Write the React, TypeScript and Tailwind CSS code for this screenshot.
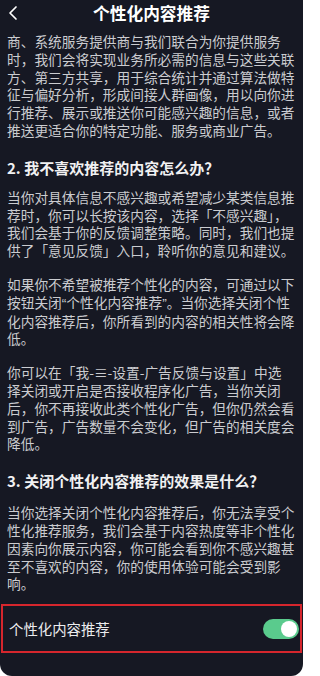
import { Fragment } from 'react';

const cjk = { fontFamily: '"Noto Sans CJK SC", "Noto Sans", sans-serif' };

const Q = ({ children }: { children: string }) => (
  <span className="font-[Liberation_Sans]">{children}</span>
);

const intro = [
  '商、系统服务提供商与我们联合为你提供服务',
  '时，我们会将实现业务所必需的信息与这些关联',
  '方、第三方共享，用于综合统计并通过算法做特',
  '征与偏好分析，形成间接人群画像，用以向你进',
  '行推荐、展示或推送你可能感兴趣的信息，或者',
  '推送更适合你的特定功能、服务或商业广告。',
];

const dislike = [
  '当你对具体信息不感兴趣或希望减少某类信息推',
  '荐时，你可以长按该内容，选择「不感兴趣」，',
  '我们会基于你的反馈调整策略。同时，我们也提',
  '供了「意见反馈」入口，聆听你的意见和建议。',
];

const adSettings = [
  '你可以在「我-≡-设置-广告反馈与设置」中选',
  '择关闭或开启是否接收程序化广告，当你关闭',
  '后，你不再接收此类个性化广告，但你仍然会看',
  '到广告，广告数量不会变化，但广告的相关度会',
  '降低。',
];

const effect = [
  '当你选择关闭个性化内容推荐后，你无法享受个',
  '性化推荐服务，我们会基于内容热度等非个性化',
  '因素向你展示内容，你可能会看到你不感兴趣甚',
  '至不喜欢的内容，你的使用体验可能会受到影',
  '响。',
];

// lines are broken by hand so they wrap exactly where the screenshot does
function Para({ lines, className = '' }: { lines: React.ReactNode[]; className?: string }) {
  return (
    <p className={`text-[13.7px] leading-[17.8px] text-[#cbccd0] whitespace-nowrap ${className}`}>
      {lines.map((line, i) => (
        <Fragment key={i}>
          {i > 0 && <br />}
          {line}
        </Fragment>
      ))}
    </p>
  );
}

function Heading({ children, className = '' }: { children: React.ReactNode; className?: string }) {
  return (
    <h2 className={`text-[15px] leading-[22px] font-semibold text-[#f1f1f2] ${className}`}>{children}</h2>
  );
}

export default function App() {
  return (
    <div className="w-[303px] h-[676px] bg-white" style={cjk}>
      <div className="h-full bg-[#161823] rounded-b-[12px] overflow-hidden flex flex-col">
        <header className="h-[33px] flex items-start pt-[2px] px-[6px]">
          <button className="w-[14px] h-[22px] flex items-center justify-center text-white">
            <svg width="12" height="16" viewBox="0 0 12 16" fill="none">
              <polyline points="9,2 3,8 9,14" stroke="currentColor" strokeWidth="1.7" strokeLinecap="round" strokeLinejoin="round" />
            </svg>
          </button>
          <h1 className="flex-1 text-center text-[16.7px] leading-[22px] font-bold text-white -ml-[14px]">
            个性化内容推荐
          </h1>
        </header>

        <main className="px-[7px]">
          <Para lines={intro} />

          <Heading className="mt-[17px]">2. 我不喜欢推荐的内容怎么办？</Heading>
          <Para lines={dislike} className="mt-[10px]" />

          <Para
            className="mt-[16px]"
            lines={[
              '如果你不希望被推荐个性化的内容，可通过以下',
              <>
                按钮关闭<Q>“</Q>个性化内容推荐<Q>”</Q>。当你选择关闭个性
              </>,
              '化内容推荐后，你所看到的内容的相关性将会降',
              '低。',
            ]}
          />

          <Para lines={adSettings} className="mt-[16px]" />

          <Heading className="mt-[17px]">3. 关闭个性化内容推荐的效果是什么？</Heading>
          <Para lines={effect} className="mt-[12px]" />
        </main>

        <div className="mt-[11px] mx-[1px] h-[49px] border-2 border-[#d6262d] flex items-center justify-between pl-[6px] pr-[1px]">
          <span className="text-[14.4px] text-[#ececee]">个性化内容推荐</span>
          <div className="w-[36px] h-[20px] rounded-full bg-[#5acb8d] flex items-center justify-end pr-[2px]">
            <div className="w-[16px] h-[16px] rounded-full bg-white" />
          </div>
        </div>
      </div>
    </div>
  );
}
